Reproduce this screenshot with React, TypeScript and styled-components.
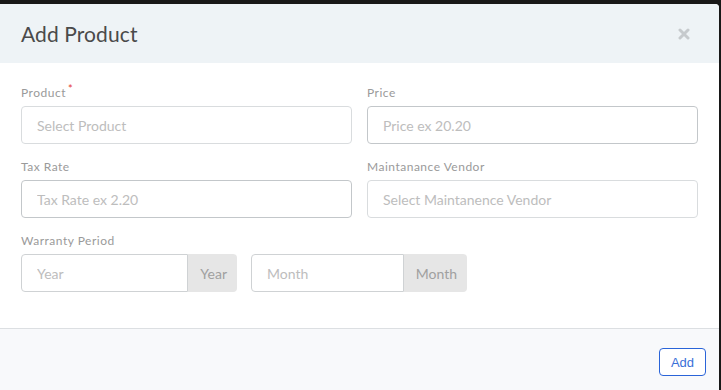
import React from "react";
import styled, { createGlobalStyle } from "styled-components";

const GlobalStyle = createGlobalStyle`
  html, body {
    margin: 0;
    padding: 0;
    background: #181818;
    font-family: Lato, "Open Sans", sans-serif;
  }
`;

const Page = styled.div`
  width: 721px;
  height: 390px;
  overflow: hidden;
  padding-top: 4px;
  box-sizing: border-box;
`;

const Modal = styled.div`
  width: 719px;
  height: 400px;
  background: #fff;
  border-top-right-radius: 4px;
  overflow: hidden;
  display: flex;
  flex-direction: column;
`;

const Header = styled.div`
  height: 59px;
  background: #eef3f6;
  display: flex;
  align-items: center;
  justify-content: space-between;
  padding: 0 29px 0 21px;
`;

const Title = styled.h4`
  margin: 0;
  font-size: 21px;
  font-weight: 400;
  color: #4a4a4a;
  letter-spacing: 0.1px;
`;

const Close = styled.button`
  border: none;
  background: none;
  padding: 0;
  width: 12px;
  height: 12px;
  display: flex;
  cursor: pointer;
`;

const Body = styled.div`
  padding: 23px 21px 36px;
  display: grid;
  grid-template-columns: repeat(2, minmax(0, 1fr));
  column-gap: 15px;
  row-gap: 16px;
  border-bottom: 1px solid #dcdfe2;
`;

const Field = styled.div<{ $wide?: boolean }>`
  display: flex;
  flex-direction: column;
  grid-column: ${({ $wide }) => ($wide ? "1 / -1" : "auto")};
`;

const Label = styled.label`
  font-size: 12px;
  color: #9a9a9a;
  height: 14px;
  line-height: 14px;
  margin-bottom: 6px;
  letter-spacing: 0.5px;
`;

const Required = styled.span`
  color: #e53935;
  font-size: 11px;
  position: relative;
  top: -4px;
  margin-left: 2px;
`;

const Input = styled.input<{ $strong?: boolean }>`
  height: 38px;
  box-sizing: border-box;
  border: 1px solid ${({ $strong }) => ($strong ? "#c3c7ca" : "#d9dcde")};
  border-radius: 4px;
  padding: 0 15px;
  font-family: inherit;
  font-size: 14px;
  color: #555;
  outline: none;
  width: 100%;
  &::placeholder {
    color: #bdbdbd;
  }
`;

const GroupRow = styled.div`
  display: flex;
  gap: 14px;
`;

const InputGroup = styled.div`
  display: flex;
  flex: none;
  width: 216px;
  height: 38px;
`;

const GroupInput = styled(Input)`
  border-top-right-radius: 0;
  border-bottom-right-radius: 0;
  border-color: #cfd2d4;
  flex: 1;
  min-width: 0;
`;

const Addon = styled.span`
  display: flex;
  align-items: center;
  padding: 0 10px 0 12px;
  background: #e6e6e6;
  border-radius: 0 4px 4px 0;
  font-size: 14px;
  color: #a0a0a0;
`;

const Footer = styled.div`
  flex: 1;
  background: #f8f9fb;
  display: flex;
  justify-content: flex-end;
  padding: 19px 13px 0 0;
  align-items: flex-start;
`;

const AddButton = styled.button`
  width: 47px;
  height: 28px;
  border: 1px solid #2a64d8;
  border-radius: 4px;
  background: #fff;
  color: #3a6fd8;
  font-family: "Liberation Sans", Arial, sans-serif;
  font-size: 13px;
  cursor: pointer;
  padding: 0;
`;

export default function App() {
  return (
    <Page>
      <GlobalStyle />
      <Modal>
        <Header>
          <Title>Add Product</Title>
          <Close aria-label="Close">
            <svg width="12" height="12" viewBox="0 0 12 12">
              <path
                d="M2 2 L10 10 M10 2 L2 10"
                stroke="#c6cacd"
                strokeWidth="3"
                strokeLinecap="round"
              />
            </svg>
          </Close>
        </Header>
        <Body>
          <Field>
            <Label>
              Product<Required>*</Required>
            </Label>
            <Input placeholder="Select Product" />
          </Field>
          <Field>
            <Label>Price</Label>
            <Input $strong placeholder="Price ex 20.20" />
          </Field>
          <Field>
            <Label>Tax Rate</Label>
            <Input $strong placeholder="Tax Rate ex 2.20" />
          </Field>
          <Field>
            <Label>Maintanance Vendor</Label>
            <Input placeholder="Select Maintanence Vendor" />
          </Field>
          <Field $wide>
            <Label>Warranty Period</Label>
            <GroupRow>
              <InputGroup>
                <GroupInput placeholder="Year" />
                <Addon>Year</Addon>
              </InputGroup>
              <InputGroup>
                <GroupInput placeholder="Month" />
                <Addon>Month</Addon>
              </InputGroup>
            </GroupRow>
          </Field>
        </Body>
        <Footer>
          <AddButton>Add</AddButton>
        </Footer>
      </Modal>
    </Page>
  );
}
